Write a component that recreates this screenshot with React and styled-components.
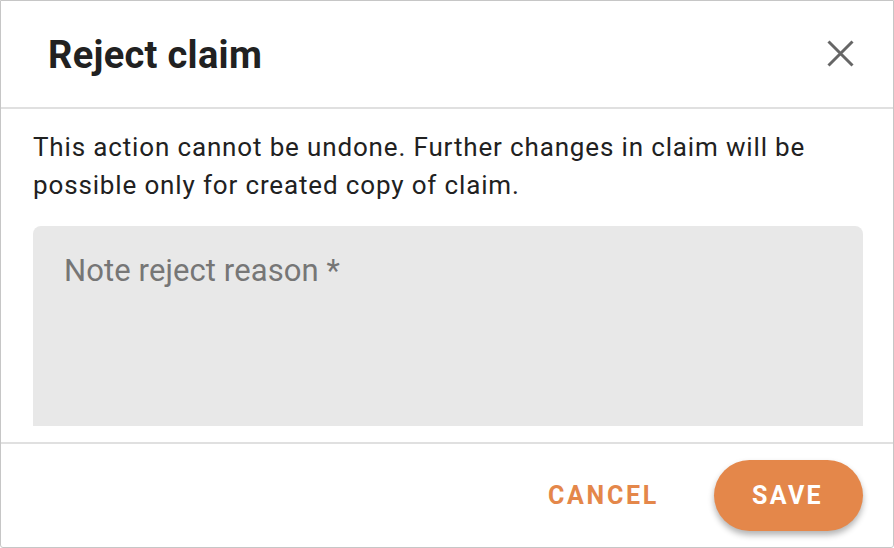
import React, { useState } from "react";
import styled, { createGlobalStyle } from "styled-components";

const GlobalStyle = createGlobalStyle`
  html, body {
    margin: 0;
    padding: 0;
    background: #ffffff;
  }
  body {
    font-family: Roboto, "Liberation Sans", Arial, sans-serif;
  }
  * {
    box-sizing: border-box;
  }
`;

function App() {
  const [reason, setReason] = useState("");
  return (
    <>
      <GlobalStyle />
      <Dialog>
        <Header>
          <Title>Reject claim</Title>
          <CloseButton aria-label="Close">
            <svg width="27" height="27" viewBox="0 0 27 27">
              <path
                d="M1.5 1.5 L25.5 25.5 M25.5 1.5 L1.5 25.5"
                stroke="#666666"
                strokeWidth="3"
                fill="none"
              />
            </svg>
          </CloseButton>
        </Header>
        <Body>
          <Message>
            This action cannot be undone. Further changes in claim will be
            possible only for created copy of claim.
          </Message>
          <ReasonField
            placeholder="Note reject reason *"
            value={reason}
            onChange={(e) => setReason(e.target.value)}
          />
        </Body>
        <Footer>
          <TextButton>CANCEL</TextButton>
          <PillButton>SAVE</PillButton>
        </Footer>
      </Dialog>
    </>
  );
}

export default App;

const Dialog = styled.div`
  width: 894px;
  height: 548px;
  border: 1px solid #c6c6c6;
  border-radius: 0 0 3px 3px;
  display: flex;
  flex-direction: column;
  background: #fff;
  overflow: hidden;
`;

const Header = styled.div`
  height: 108px;
  flex: none;
  display: flex;
  align-items: center;
  justify-content: space-between;
  padding: 0 39px 0 47px;
  border-bottom: 2px solid #e0e0e0;
`;

const Title = styled.h2`
  margin: 0;
  font-size: 38px;
  font-weight: 700;
  color: #212121;
  letter-spacing: 0.3px;
  padding-top: 2px;
`;

const CloseButton = styled.button`
  border: none;
  background: none;
  padding: 0;
  width: 27px;
  height: 27px;
  cursor: pointer;
  display: flex;
  margin-bottom: 2px;
`;

const Body = styled.div`
  flex: 1;
  display: flex;
  flex-direction: column;
  padding: 19px 26px 16px 32px;
  overflow: hidden;
`;

const Message = styled.p`
  margin: 0 0 22px 0;
  font-size: 26px;
  line-height: 38px;
  letter-spacing: 0.85px;
  color: #212121;
`;

const ReasonField = styled.textarea`
  flex: 1;
  margin-right: 4px;
  border: none;
  outline: none;
  resize: none;
  background: #e8e8e8;
  border-radius: 8px 8px 0 0;
  padding: 26px 31px;
  font-family: Roboto, "Liberation Sans", Arial, sans-serif;
  font-size: 31px;
  line-height: 1.2;
  letter-spacing: 0.1px;
  color: #212121;
  &::placeholder {
    color: #767676;
  }
`;

const Footer = styled.div`
  height: 105px;
  flex: none;
  border-top: 2px solid #e0e0e0;
  display: flex;
  align-items: center;
  justify-content: flex-end;
  gap: 47px;
  padding: 0 30px 1px 0;
`;

const TextButton = styled.button`
  border: none;
  background: none;
  padding: 8px 8px;
  font-family: Roboto, "Liberation Sans", Arial, sans-serif;
  font-size: 25px;
  font-weight: 700;
  letter-spacing: 2.7px;
  color: #e4874a;
  cursor: pointer;
`;

const PillButton = styled.button`
  width: 149px;
  height: 71px;
  border: none;
  border-radius: 36px;
  background: #e4874a;
  color: #ffffff;
  font-family: Roboto, "Liberation Sans", Arial, sans-serif;
  font-size: 25px;
  font-weight: 700;
  letter-spacing: 2.3px;
  padding-left: 4px;
  box-shadow: 0 4px 6px rgba(0, 0, 0, 0.3);
  cursor: pointer;
`;
